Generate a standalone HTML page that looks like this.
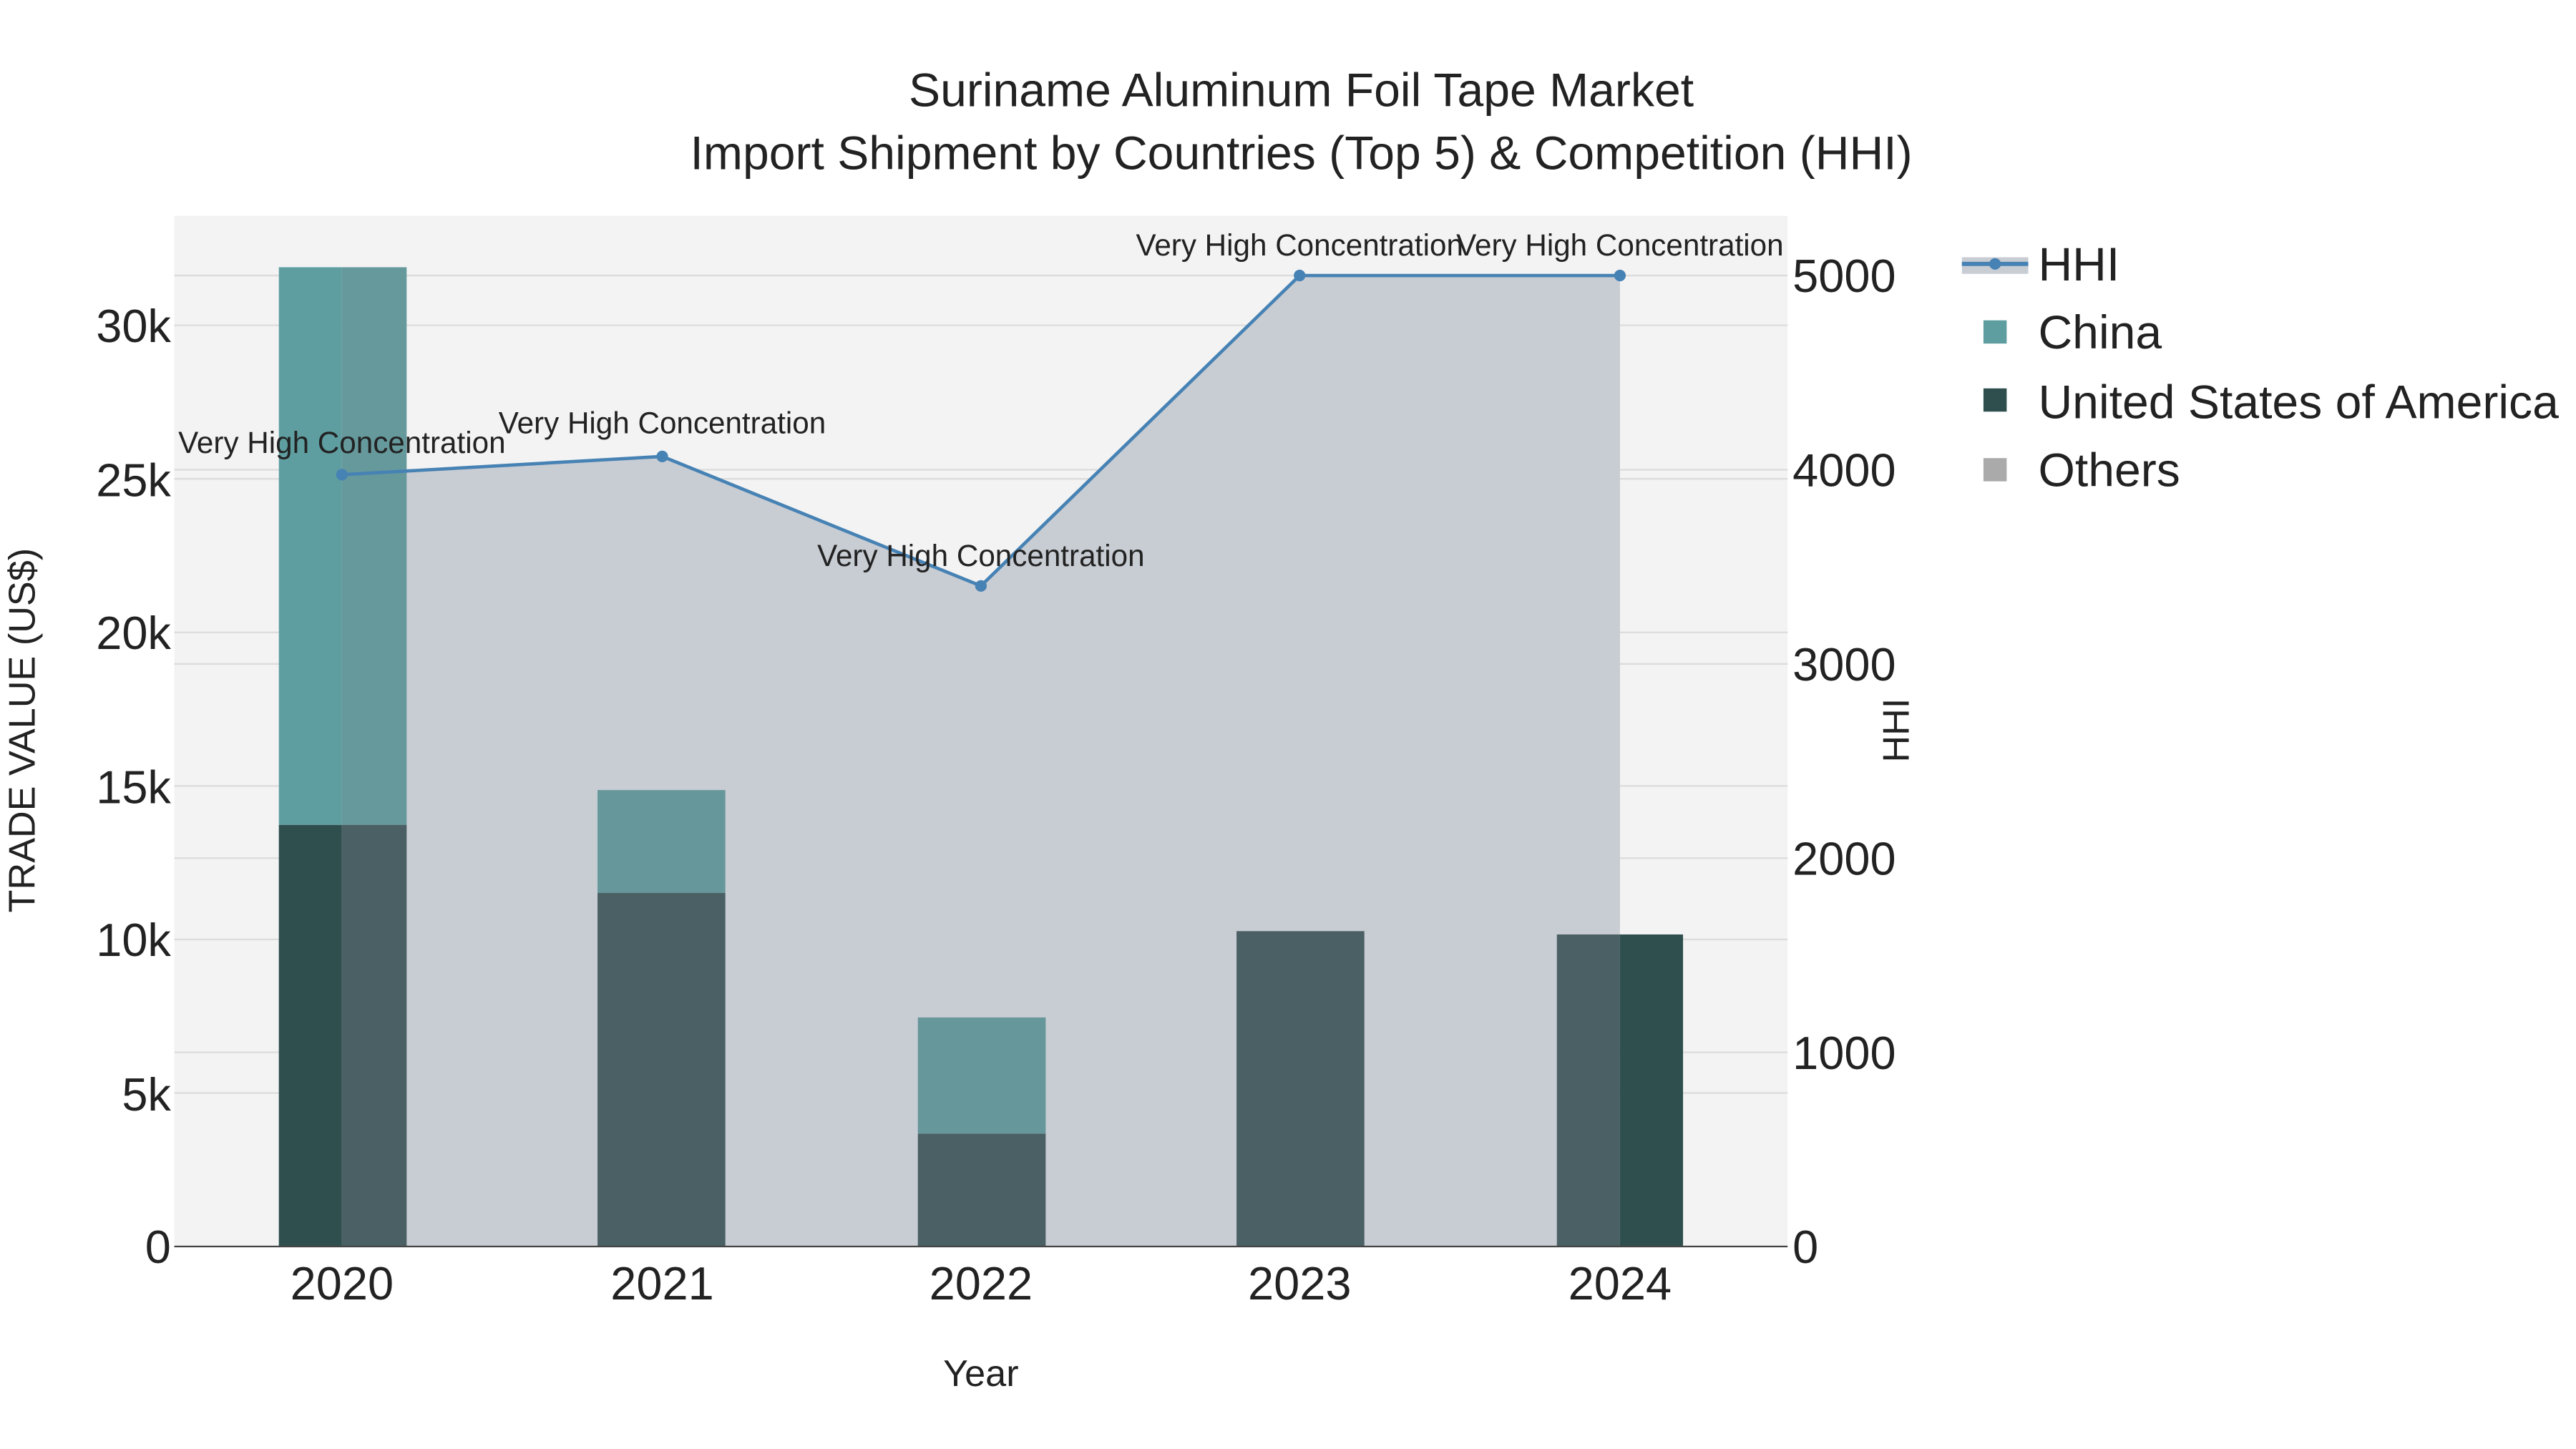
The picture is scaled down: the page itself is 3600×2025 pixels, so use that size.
<!DOCTYPE html>
<html><head><meta charset="utf-8"><style>html,body{margin:0;padding:0;background:#fff}svg{display:block}text{font-family:"Liberation Sans",sans-serif;fill:#222}</style></head>
<body>
<svg width="3600" height="2025" viewBox="0 0 1552 873" xmlns="http://www.w3.org/2000/svg">
<rect width="1552" height="873" fill="#fff"/>
<rect x="105" y="130" width="972" height="621" fill="#f3f3f3"/>
<g stroke="#dcdcdc" stroke-width="1">
<line x1="105" x2="1077" y1="658.5" y2="658.5"/><line x1="105" x2="1077" y1="566" y2="566"/><line x1="105" x2="1077" y1="473.5" y2="473.5"/><line x1="105" x2="1077" y1="381" y2="381"/><line x1="105" x2="1077" y1="288.5" y2="288.5"/><line x1="105" x2="1077" y1="196" y2="196"/>
<line x1="105" x2="1077" y1="634" y2="634"/><line x1="105" x2="1077" y1="517" y2="517"/><line x1="105" x2="1077" y1="400" y2="400"/><line x1="105" x2="1077" y1="283" y2="283"/><line x1="105" x2="1077" y1="166" y2="166"/>
</g>
<polygon points="206,286 399,275 591,353 783,166 976,166 976,751 206,751" fill="#c8ccd3"/>
<rect x="168" y="161" width="38" height="336" fill="#5f9ea0"/>
<rect x="168" y="497" width="38" height="254" fill="#2f4f4f"/>
<rect x="206" y="161" width="39" height="336" fill="#66999c"/>
<rect x="206" y="497" width="39" height="254" fill="#4a6064"/>
<rect x="360" y="476" width="77" height="62" fill="#66979b"/>
<rect x="360" y="538" width="77" height="213" fill="#4a6064"/>
<rect x="553" y="613" width="77" height="70" fill="#66979b"/>
<rect x="553" y="683" width="77" height="68" fill="#4a6064"/>
<rect x="745" y="561" width="77" height="190" fill="#4a6064"/>
<rect x="938" y="563" width="38" height="188" fill="#4a6064"/>
<rect x="976" y="563" width="38" height="188" fill="#2f4f4f"/>
<line x1="105" x2="1077" y1="751" y2="751" stroke="#444" stroke-width="1"/>
<polyline points="206,286 399,275 591,353 783,166 976,166" fill="none" stroke="#4682b4" stroke-width="2"/>
<g fill="#4682b4"><circle cx="206" cy="286" r="3.5"/><circle cx="399" cy="275" r="3.5"/><circle cx="591" cy="353" r="3.5"/><circle cx="783" cy="166" r="3.5"/><circle cx="976" cy="166" r="3.5"/></g>
<g font-size="18.2" text-anchor="middle">
<text x="206" y="273">Very High Concentration</text>
<text x="399" y="261">Very High Concentration</text>
<text x="591" y="341">Very High Concentration</text>
<text x="783" y="154">Very High Concentration</text>
<text x="976" y="154">Very High Concentration</text>
</g>
<g font-size="28.5" text-anchor="middle">
<text x="784" y="64">Suriname Aluminum Foil Tape Market</text>
<text x="784" y="102">Import Shipment by Countries (Top 5) &amp; Competition (HHI)</text>
</g>
<g font-size="28" text-anchor="end">
<text x="103" y="761">0</text><text x="103" y="669">5k</text><text x="103" y="576">10k</text><text x="103" y="484">15k</text><text x="103" y="391">20k</text><text x="103" y="299">25k</text><text x="103" y="206">30k</text>
</g>
<g font-size="28" text-anchor="start">
<text x="1080" y="761">0</text><text x="1080" y="644">1000</text><text x="1080" y="527">2000</text><text x="1080" y="410">3000</text><text x="1080" y="293">4000</text><text x="1080" y="176">5000</text>
</g>
<g font-size="28" text-anchor="middle">
<text x="206" y="783">2020</text><text x="399" y="783">2021</text><text x="591" y="783">2022</text><text x="783" y="783">2023</text><text x="976" y="783">2024</text>
</g>
<text x="591" y="835" font-size="22.5" text-anchor="middle">Year</text>
<text transform="translate(21,440) rotate(-90)" font-size="22.5" text-anchor="middle">TRADE VALUE (US$)</text>
<text transform="translate(1150,440) rotate(-90)" font-size="22.5" text-anchor="middle">HHI</text>
<rect x="1182" y="155" width="40" height="10" fill="#c8ccd3"/>
<line x1="1182" x2="1222" y1="159" y2="159" stroke="#4682b4" stroke-width="2.5"/>
<circle cx="1202" cy="159" r="3.5" fill="#4682b4"/>
<rect x="1195" y="193" width="14" height="14" fill="#5f9ea0"/>
<rect x="1195" y="234" width="14" height="14" fill="#2f4f4f"/>
<rect x="1195" y="276" width="14" height="14" fill="#aaaaaa"/>
<g font-size="28.5">
<text x="1228" y="169">HHI</text>
<text x="1228" y="210">China</text>
<text x="1228" y="252">United States of America</text>
<text x="1228" y="293">Others</text>
</g>
</svg>
</body></html>
